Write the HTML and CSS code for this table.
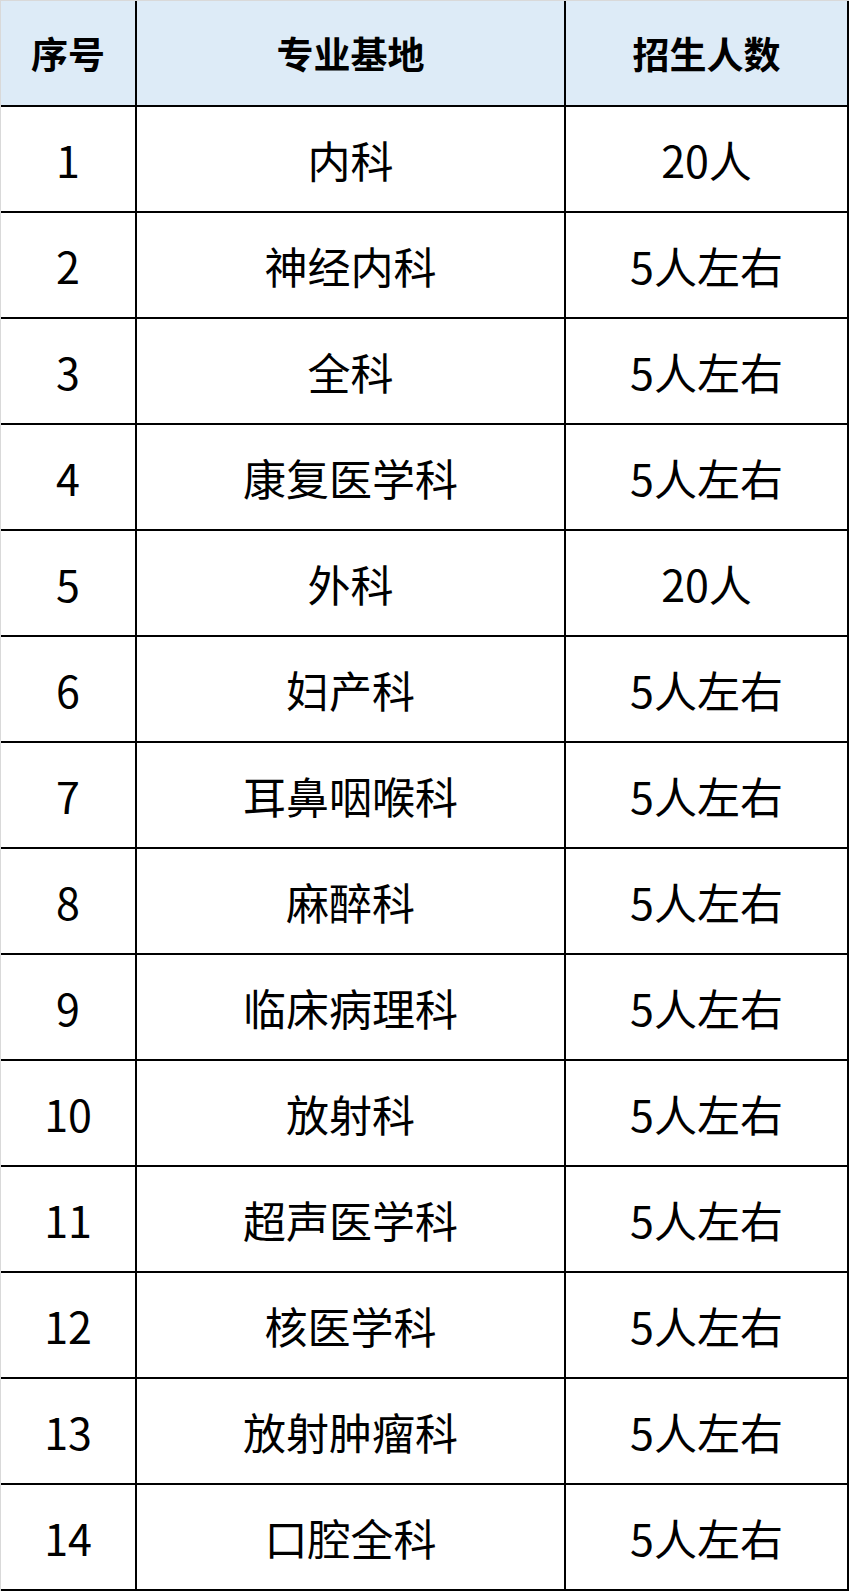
FILE: index.html
```html
<!DOCTYPE html>
<html lang="zh-CN">
<head>
<meta charset="utf-8">
<title>招生人数</title>
<link rel="stylesheet" href="styles.css">
</head>
<body>
<div class="table">
  <div class="cell head">序号</div><div class="cell head">专业基地</div><div class="cell head last">招生人数</div>
  <div class="cell">1</div><div class="cell">内科</div><div class="cell last">20人</div>
  <div class="cell">2</div><div class="cell">神经内科</div><div class="cell last">5人左右</div>
  <div class="cell">3</div><div class="cell">全科</div><div class="cell last">5人左右</div>
  <div class="cell">4</div><div class="cell">康复医学科</div><div class="cell last">5人左右</div>
  <div class="cell">5</div><div class="cell">外科</div><div class="cell last">20人</div>
  <div class="cell">6</div><div class="cell">妇产科</div><div class="cell last">5人左右</div>
  <div class="cell">7</div><div class="cell">耳鼻咽喉科</div><div class="cell last">5人左右</div>
  <div class="cell">8</div><div class="cell">麻醉科</div><div class="cell last">5人左右</div>
  <div class="cell">9</div><div class="cell">临床病理科</div><div class="cell last">5人左右</div>
  <div class="cell">10</div><div class="cell">放射科</div><div class="cell last">5人左右</div>
  <div class="cell">11</div><div class="cell">超声医学科</div><div class="cell last">5人左右</div>
  <div class="cell">12</div><div class="cell">核医学科</div><div class="cell last">5人左右</div>
  <div class="cell">13</div><div class="cell">放射肿瘤科</div><div class="cell last">5人左右</div>
  <div class="cell">14</div><div class="cell">口腔全科</div><div class="cell last">5人左右</div>
</div>
</body>
</html>
```
FILE: styles.css
```css
html, body {
  margin: 0;
  padding: 0;
  background: #d9d9d9;
}
body {
  padding: 1px 0 0 1px;
  font-family: "Noto Sans CJK SC", "Noto Sans", sans-serif;
  color: #000;
}
.table {
  width: 848px;
  height: 1590px;
  display: grid;
  grid-template-columns: 136px 429px 283px;
  grid-template-rows: 106px repeat(14, 1fr);
  background: #fff;
}
.cell {
  box-sizing: border-box;
  border-right: 2px solid #000;
  border-bottom: 2px solid #000;
  display: flex;
  align-items: center;
  justify-content: center;
  font-size: 43px;
  line-height: 1;
  background: #fff;
}
.head {
  background: #ddebf7;
  font-size: 37px;
  font-weight: bold;
}
```
